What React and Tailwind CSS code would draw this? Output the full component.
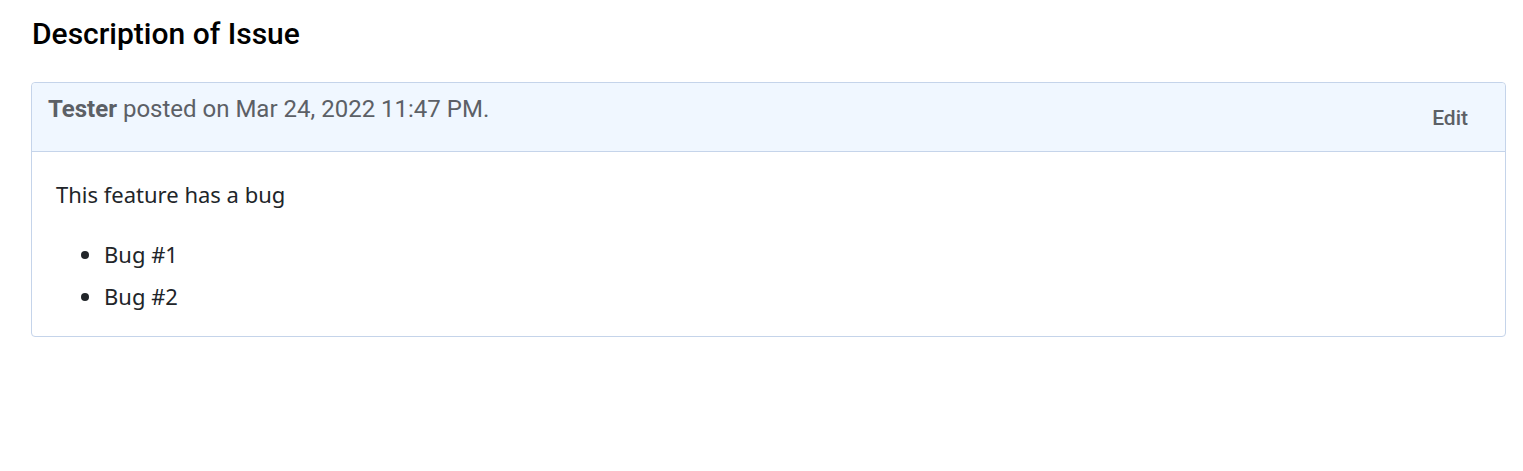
import React from "react";

const App = () => {
  return (
    <div className="min-h-screen bg-white px-[31px] pt-[15px] text-black">
      <h2 className="text-[30px] font-medium leading-[38px] mb-[29px] ml-[1px] font-['Roboto',sans-serif]">
        Description of Issue
      </h2>

      {/* Issue card */}
      <div className="border border-[#c5d4ea] rounded-[4px] w-[1475px]">
        <div className="flex justify-between items-start bg-[#f0f7ff] border-b border-[#c5d4ea] h-[69px] pl-[16px] pr-[37px] font-['Roboto',sans-serif] text-[#5c6066] rounded-t-[4px]">
          <p className="text-[24px] leading-[30px] mt-[11px]">
            <strong className="font-bold">Tester</strong> posted on Mar 24, 2022 11:47 PM.
          </p>
          <button className="text-[21px] font-medium mt-[21px] leading-[28px]">Edit</button>
        </div>
        <div className="px-[24px] pt-[27px] pb-[25px] text-[#212529] font-['Noto_Sans',sans-serif] text-[22px]">
          <p className="leading-[30px] mb-[30px]">This feature has a bug</p>
          <ul className="list-disc pl-[48px] marker:text-[#212529]">
            <li className="leading-[30px] mb-[12px]">Bug #1</li>
            <li className="leading-[30px]">Bug #2</li>
          </ul>
        </div>
      </div>
    </div>
  );
};

export default App;
